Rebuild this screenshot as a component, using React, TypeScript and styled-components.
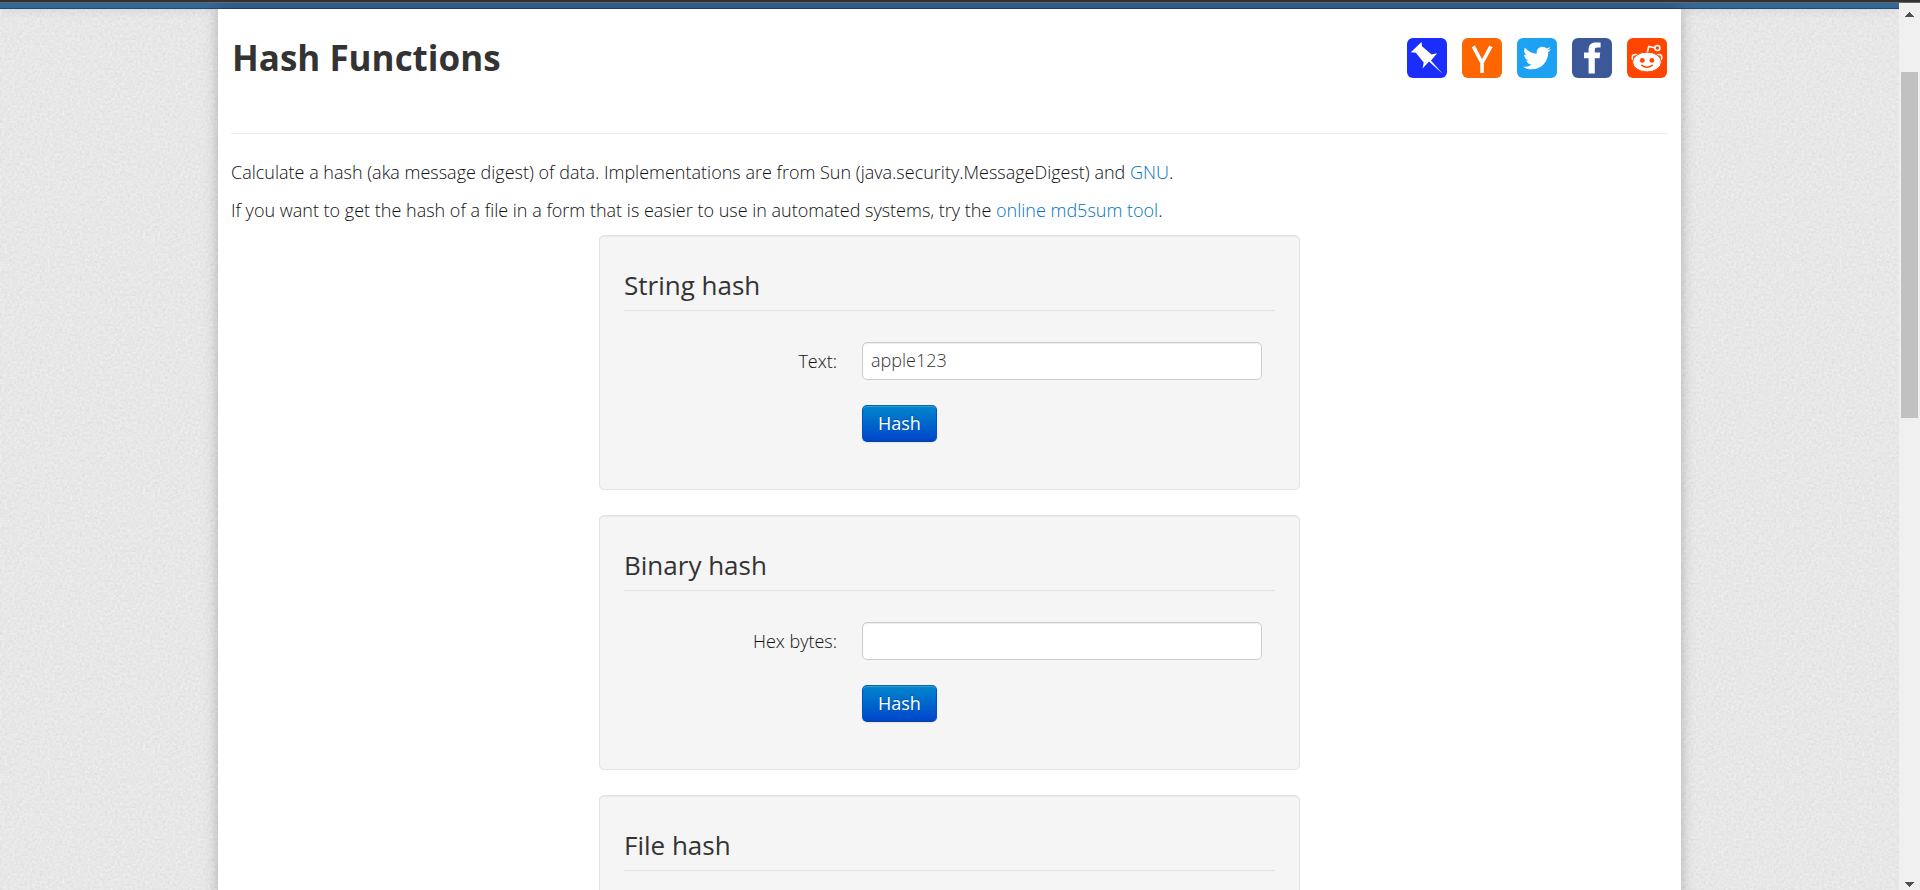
import React from "react";
import styled, { createGlobalStyle } from "styled-components";
import { FaTwitter } from "react-icons/fa";

const paperGrain = encodeURIComponent(
  `<svg xmlns="http://www.w3.org/2000/svg" width="256" height="256">
    <filter id="n" x="0" y="0" width="100%" height="100%" color-interpolation-filters="sRGB">
      <feTurbulence type="fractalNoise" baseFrequency="0.4" numOctaves="3" stitchTiles="stitch"/>
      <feColorMatrix values="0.08 0.04 0 0 0.846  0.08 0.04 0 0 0.846  0.08 0.04 0 0 0.846  0 0 0 0 1"/>
    </filter>
    <rect width="256" height="256" filter="url(#n)"/>
  </svg>`
);

const GlobalStyle = createGlobalStyle`
  *, *::before, *::after { box-sizing: border-box; }
  body {
    margin: 0;
    color: #111;
    font: 300 18px/25px "Open Sans", "Noto Sans", sans-serif;
  }
`;

const Frame = styled.div`
  display: flex;
  flex-direction: column;
  height: 100vh;
`;

const WindowEdge = styled.div`
  flex: none;
  height: 3px;
  background: #333;
  border-bottom: 1px solid #6b6461;
`;

const Body = styled.div`
  display: flex;
  flex: 1;
  min-height: 0;
`;

const Viewport = styled.div`
  display: flex;
  flex-direction: column;
  flex: 1;
  min-width: 0;
  overflow: hidden;
  background: #e7e7e7 url("data:image/svg+xml,${paperGrain}");
`;

const NavBar = styled.nav`
  position: relative;
  flex: none;
  height: 6px;
  background: #336699;
  border-bottom: 1px solid #24496e;
  box-shadow: 0 1px 10px rgba(0, 0, 0, 0.1);
`;

const Paper = styled.main`
  position: relative;
  flex: 1 0 auto;
  width: 100%;
  max-width: 1463px;
  margin: 0 auto;
  padding: 0 13px;
  background: #fff;
  box-shadow: 0 0 13px rgba(0, 0, 0, 0.25);
`;

const Header = styled.header`
  display: flex;
  justify-content: space-between;
  align-items: flex-start;
  height: 125px;
  padding: 24px 1px 0 1px;
  margin-bottom: 25px;
  border-bottom: 1px solid #eee;
`;

const Title = styled.h1`
  margin: 0;
  color: #333;
  font-size: 35px;
  line-height: 50px;
  font-weight: 700;
`;

const ShareList = styled.div`
  display: flex;
  gap: 15px;
  padding-top: 5px;
`;

const ShareLink = styled.a<{ $color: string }>`
  display: flex;
  align-items: center;
  justify-content: center;
  width: 40px;
  height: 40px;
  border-radius: 6px;
  background: ${(p) => p.$color};
  color: #fff;
`;

const Paragraph = styled.p`
  margin: 0 0 12px;
  line-height: 26px;
`;

const Link = styled.a`
  color: #0074c2;
  text-decoration: none;
`;

const Forms = styled.div`
  display: flex;
  flex-direction: column;
  gap: 25px;
  width: 100%;
  max-width: 701px;
  margin: 0 auto;
`;

const Well = styled.form`
  min-height: 255px;
  padding: 24px 24px 47px;
  background: #f5f5f5;
  border: 1px solid #e3e3e3;
  border-radius: 5px;
  box-shadow: inset 0 1px 1px rgba(0, 0, 0, 0.05);
`;

const Fieldset = styled.fieldset`
  min-width: 0;
  margin: 0;
  padding: 0;
  border: 0;
`;

const Legend = styled.legend`
  width: 100%;
  margin-bottom: 31px;
  padding: 0;
  border-bottom: 1px solid #e2e2e2;
  color: #333;
  font-size: 26px;
  line-height: 50px;
  font-weight: 400;
`;

const Row = styled.div`
  display: grid;
  grid-template-columns: 213px minmax(0, 400px);
  column-gap: 25px;
  align-items: center;

  & + & {
    margin-top: 25px;
  }
`;

const Label = styled.label`
  text-align: right;
`;

const TextInput = styled.input`
  width: 100%;
  height: 38px;
  padding: 3px 8px 5px;
  border: 1px solid #ccc;
  border-radius: 5px;
  background: #fff;
  box-shadow: inset 0 1px 1px rgba(0, 0, 0, 0.075);
  color: #333;
  font: inherit;
  outline: none;
`;

const SubmitButton = styled.button`
  grid-column: 2;
  justify-self: start;
  height: 37px;
  padding: 0 15px;
  border: 1px solid;
  border-color: #0463a5 #0450b4 #04439c;
  border-radius: 5px;
  background: linear-gradient(to bottom, #0088cc, #0044cc) border-box;
  box-shadow: inset 0 1px 0 rgba(255, 255, 255, 0.2), 0 1px 2px rgba(0, 0, 0, 0.05);
  color: #fff;
  font: inherit;
  font-weight: 400;
  text-shadow: 0 -1px 0 rgba(0, 0, 0, 0.25);
`;

const ScrollTrack = styled.div`
  display: flex;
  flex-direction: column;
  align-items: center;
  flex: none;
  width: 21px;
  padding: 9px 0 3px;
  background: #f0f0f0;
`;

const ScrollThumb = styled.div`
  flex: 0 0 39.5%;
  width: 17px;
  margin: 55px 0 auto;
  background: #c1c1c1;
`;

const ScrollArrow = ({ down = false }: { down?: boolean }) => (
  <svg width="9" height="5" viewBox="0 0 9 5" fill="#505050" shapeRendering="crispEdges" aria-hidden="true">
    <path d={down ? "M0 0H9L4.5 5Z" : "M0 5H9L4.5 0Z"} />
  </svg>
);

const PinboardIcon = () => (
  <svg width="40" height="40" viewBox="0 0 40 40" fill="#fff" aria-hidden="true">
    <path d="M14.5 4 15 8.2 24.6 16.4 30.2 15.2 24 22.6 35.6 35.8 22 23.6 15.6 30.6 16.7 24.4 8.8 14.8 3.8 14.2Z" />
  </svg>
);

const YIcon = () => (
  <svg width="40" height="40" viewBox="0 0 40 40" fill="none" stroke="#fff" strokeWidth="3.6" aria-hidden="true">
    <path d="M11.3 8.4 20 24.8 28.9 8.4M20 23.8V35" />
  </svg>
);

const FacebookIcon = () => (
  <svg width="40" height="40" viewBox="0 0 40 40" fill="#fff" aria-hidden="true">
    <path d="M16.6 35.6V20.2H12V14.6H16.6V11.4C16.6 6.8 19.3 4.4 23.8 4.4H28.6V9.6H25.4C23.4 9.6 22.8 10.4 22.8 12V14.6H28.2L27.6 20.2H22.8V35.6Z" />
  </svg>
);

const RedditIcon = () => (
  <svg width="40" height="40" viewBox="0 0 40 40" fill="none" stroke="#fff" aria-hidden="true">
    <path d="M20 15.5 21.8 8.4 28 9.8" strokeWidth="1.6" />
    <circle cx="30.4" cy="10" r="2.5" strokeWidth="1.6" />
    <circle cx="8.2" cy="19.6" r="3" strokeWidth="1.5" />
    <circle cx="31.8" cy="19.6" r="3" strokeWidth="1.5" />
    <ellipse cx="20" cy="24" rx="14.4" ry="9.9" fill="#fff" stroke="#ff4500" strokeWidth="1" />
    <circle cx="15.3" cy="22.4" r="2.4" fill="#ff4500" stroke="none" />
    <circle cx="24.9" cy="22.4" r="2.4" fill="#ff4500" stroke="none" />
    <path d="M14.8 27.4Q20 31.2 25.2 27.4" stroke="#ff4500" strokeWidth="1.5" strokeLinecap="round" />
  </svg>
);

interface HashFormProps {
  id: string;
  title: string;
  label?: string;
  value?: string;
}

const HashForm = ({ id, title, label, value = "" }: HashFormProps) => (
  <Well onSubmit={(e) => e.preventDefault()}>
    <Fieldset>
      <Legend>{title}</Legend>
      {label && (
        <>
          <Row>
            <Label htmlFor={id}>{label}</Label>
            <TextInput id={id} type="text" defaultValue={value} />
          </Row>
          <Row>
            <SubmitButton type="submit">Hash</SubmitButton>
          </Row>
        </>
      )}
    </Fieldset>
  </Well>
);

export default function App() {
  return (
    <>
      <GlobalStyle />
      <Frame>
        <WindowEdge />
        <Body>
          <Viewport>
            <NavBar />
            <Paper>
              <Header>
                <Title>Hash Functions</Title>
                <ShareList>
                  <ShareLink href="#pinboard" aria-label="Pinboard" $color="#1a2dfa">
                    <PinboardIcon />
                  </ShareLink>
                  <ShareLink href="#hn" aria-label="Hacker News" $color="#ff6600">
                    <YIcon />
                  </ShareLink>
                  <ShareLink href="#twitter" aria-label="Twitter" $color="#1da1f2">
                    <FaTwitter size={28} />
                  </ShareLink>
                  <ShareLink href="#facebook" aria-label="Facebook" $color="#3b5998">
                    <FacebookIcon />
                  </ShareLink>
                  <ShareLink href="#reddit" aria-label="Reddit" $color="#ff4500">
                    <RedditIcon />
                  </ShareLink>
                </ShareList>
              </Header>
              <Paragraph>
                Calculate a hash (aka message digest) of data. Implementations are from Sun
                (java.security.MessageDigest) and <Link href="#gnu">GNU</Link>.
              </Paragraph>
              <Paragraph>
                If you want to get the hash of a file in a form that is easier to use in automated
                systems, try the <Link href="#md5sum">online md5sum tool</Link>.
              </Paragraph>
              <Forms>
                <HashForm id="text" title="String hash" label="Text:" value="apple123" />
                <HashForm id="hex" title="Binary hash" label="Hex bytes:" />
                <HashForm id="file" title="File hash" />
              </Forms>
            </Paper>
          </Viewport>
          <ScrollTrack aria-hidden="true">
            <ScrollArrow />
            <ScrollThumb />
            <ScrollArrow down />
          </ScrollTrack>
        </Body>
      </Frame>
    </>
  );
}
